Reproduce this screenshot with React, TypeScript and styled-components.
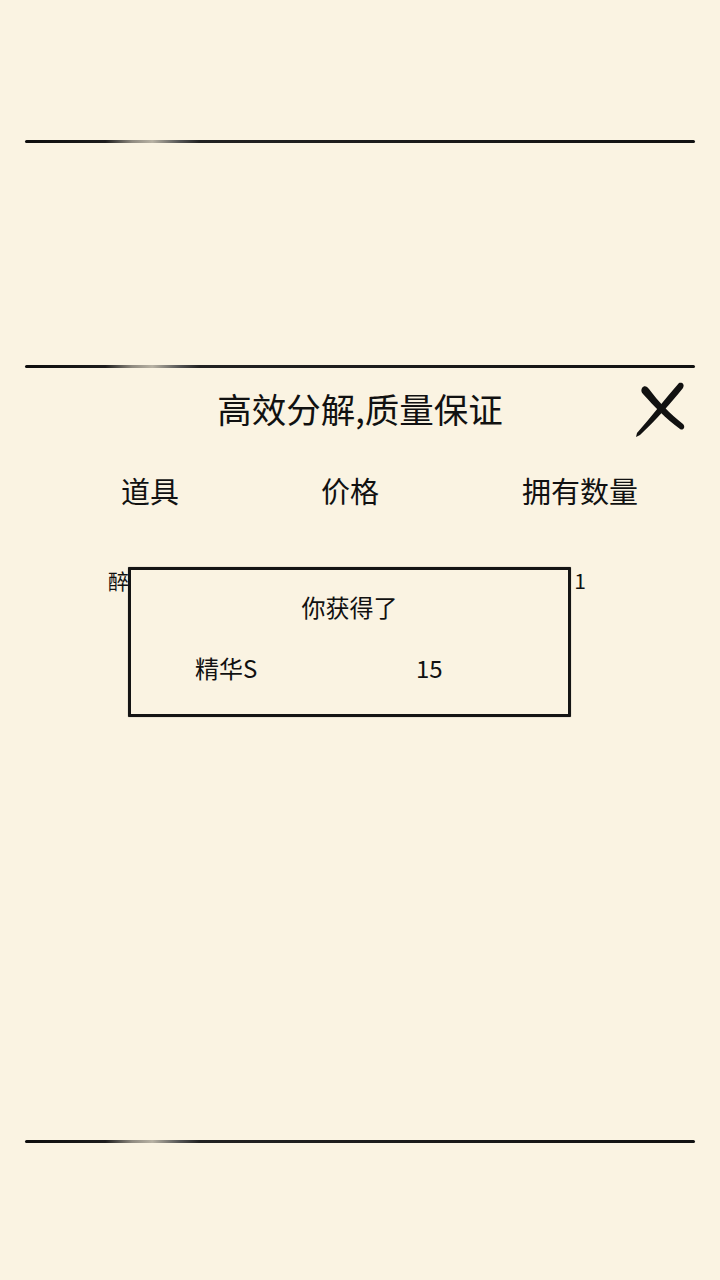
import React from 'react'
import styled, {createGlobalStyle} from 'styled-components'

type Item = {
  name: string
  owned: number
}

const items: Item[] = [{name: '醉仙酒壶', owned: 1}]

const reward = {name: '精华S', amount: 15}

export default function App() {
  return (
    <>
      <GlobalStyle />
      <Page>
        <TopSpace />
        <Rule />
        <Banner />
        <Rule />
        <Panel>
          <TitleRow>
            <span />
            <Title>高效分解,质量保证</Title>
            <Close aria-label="关闭">
              <CloseIcon />
            </Close>
          </TitleRow>
          <HeaderRow>
            <Cell>道具</Cell>
            <Cell>价格</Cell>
            <Cell>拥有数量</Cell>
          </HeaderRow>
          {items.map((item) => (
            <ItemRow key={item.name}>
              <Cell>{item.name}</Cell>
              <Cell />
              <Cell>{item.owned}</Cell>
            </ItemRow>
          ))}
          <Dialog>
            <DialogTitle>你获得了</DialogTitle>
            <RewardRow>
              <span>{reward.name}</span>
              <span>{reward.amount}</span>
            </RewardRow>
          </Dialog>
        </Panel>
        <Rule />
      </Page>
    </>
  )
}

function CloseIcon() {
  return (
    <svg width={54} height={58} viewBox="0 0 54 58" fill="#111">
      <path d="M8 8 C10 5 13 6 15 9 C24 21 36 34 49 44 C52 47 49 51 46 49 C32 39 20 26 9 14 C7 12 7 10 8 8 Z" />
      <path d="M45 3 C48 2 51 4 49 8 C37 23 22 40 6 55 L2 57 L3 53 C17 37 31 19 45 3 Z" />
    </svg>
  )
}

const GlobalStyle = createGlobalStyle`
  html, body {
    margin: 0;
    padding: 0;
    background: #faf3e2;
  }
  body {
    font-family: "Noto Sans CJK SC", "Noto Sans", sans-serif;
    color: #111;
  }
`

const Page = styled.div`
  width: 720px;
  min-height: 1280px;
  background: #faf3e2;
`

const TopSpace = styled.div`
  height: 140px;
`

const Banner = styled.div`
  height: 222px;
`

const Rule = styled.div`
  margin: 0 25px;
  height: 3px;
  border-radius: 2px;
  background: linear-gradient(
    to right,
    #0d0d0d 0%,
    #1c1c1c 12%,
    #8f8a80 16%,
    #b8b2a4 19%,
    #555 23%,
    #222 26%,
    #1a1a1a 60%,
    #111 100%
  );
`

const Panel = styled.div`
  position: relative;
  height: 772px;
`

const TitleRow = styled.div`
  display: grid;
  grid-template-columns: 1fr auto 1fr;
  align-items: start;
  padding: 12px 32px 0;
`

const Title = styled.h1`
  margin: 8px 0 0;
  font-size: 34.5px;
  line-height: 40px;
  font-weight: normal;
  white-space: nowrap;
`

const Close = styled.button`
  justify-self: end;
  width: 54px;
  height: 52px;
  padding: 0;
  border: 0;
  background: none;
  cursor: pointer;
  overflow: visible;
`

const HeaderRow = styled.div`
  display: grid;
  grid-template-columns: 200px 200px 260px;
  padding-left: 50px;
  margin-top: 40px;
  font-size: 29px;
  line-height: 36px;
`

const ItemRow = styled(HeaderRow)`
  margin-top: 59px;
  font-size: 21px;
  line-height: 26px;
`

const Cell = styled.div`
  text-align: center;
  white-space: nowrap;
`

const Dialog = styled.div`
  position: absolute;
  left: 128px;
  top: 199px;
  width: 437px;
  height: 144px;
  border: 3px solid #141414;
  border-radius: 1px;
  background: #faf3e2;
  box-shadow: 0 0 1px rgba(0, 0, 0, 0.6);
`

const DialogTitle = styled.div`
  margin-top: 24px;
  text-align: center;
  font-size: 24px;
  line-height: 26px;
`

const RewardRow = styled.div`
  display: grid;
  grid-template-columns: 221px auto;
  padding-left: 64px;
  margin-top: 35px;
  font-size: 24px;
  line-height: 26px;
`
